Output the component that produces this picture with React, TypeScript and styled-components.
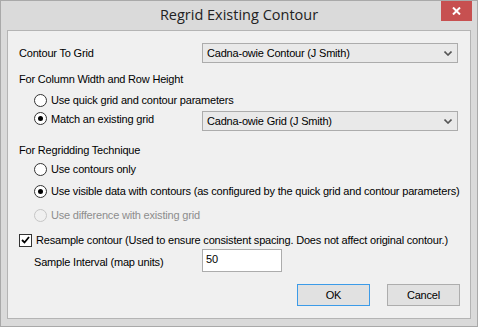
import styled, { createGlobalStyle } from 'styled-components'

const GlobalStyle = createGlobalStyle`
  html, body {
    margin: 0;
    padding: 0;
    background: #dadada;
  }
`

const Window = styled.div`
  width: 478px;
  height: 327px;
  box-sizing: border-box;
  background: #dadada;
  border: 1px solid #a9a9a9;
  display: flex;
  flex-direction: column;
  font-family: 'Liberation Sans', Arial, sans-serif;
  font-size: 11px;
  letter-spacing: -0.19px;
  color: #000;
`

const TitleBar = styled.div`
  height: 29px;
  flex: none;
  display: flex;
  align-items: center;
  justify-content: center;
  position: relative;
`

const Title = styled.div`
  font-family: 'Open Sans', 'Noto Sans', sans-serif;
  font-size: 14.5px;
  letter-spacing: 0;
  color: #222;
  margin-top: -2px;
`

const CloseButton = styled.div`
  position: absolute;
  top: 0;
  right: 5px;
  width: 31px;
  height: 20px;
  background: #c75050;
  display: flex;
  align-items: center;
  justify-content: center;
`

const Client = styled.div`
  flex: 1;
  margin: 0 6px 7px 6px;
  background: #f0f0f0;
  border: 1px solid #b4b4b4;
  padding: 12px 0 0 0;
  display: flex;
  flex-direction: column;
`

const Row = styled.div<{ $h: number; $top?: number; $indent?: number; $align?: string }>`
  height: ${p => p.$h}px;
  margin-top: ${p => p.$top ?? 0}px;
  padding-left: ${p => p.$indent ?? 11}px;
  display: flex;
  align-items: ${p => p.$align ?? 'center'};
`

const Label = styled.span<{ $w?: number; $disabled?: boolean }>`
  width: ${p => (p.$w ? `${p.$w}px` : 'auto')};
  flex: none;
  white-space: nowrap;
  color: ${p => (p.$disabled ? '#8d8d8d' : '#000')};
`

const Combo = styled.div`
  width: 256px;
  height: 20px;
  box-sizing: border-box;
  background: #e9e9e9;
  border: 1px solid #acacac;
  display: flex;
  align-items: center;
  justify-content: space-between;
  padding: 0 5px 0 4px;
`

const RadioLabel = styled.label<{ $w?: number }>`
  display: flex;
  align-items: center;
  gap: 4px;
  height: 15px;
  width: ${p => (p.$w ? `${p.$w}px` : 'auto')};
  flex: none;
`

const RadioCircle = styled.span<{ $checked?: boolean; $disabled?: boolean }>`
  width: 13px;
  height: 13px;
  box-sizing: border-box;
  border-radius: 50%;
  border: 1px solid ${p => (p.$disabled ? '#c6c6c6' : '#333')};
  background: ${p => (p.$disabled ? '#f0f0f0' : '#fff')};
  display: flex;
  align-items: center;
  justify-content: center;
  flex: none;

  &::after {
    content: '';
    display: ${p => (p.$checked ? 'block' : 'none')};
    width: 5px;
    height: 5px;
    border-radius: 50%;
    background: #000;
  }
`

const CheckBox = styled.span`
  width: 13px;
  height: 13px;
  box-sizing: border-box;
  border: 1px solid #333;
  background: #fff;
  display: flex;
  align-items: center;
  justify-content: center;
  flex: none;
`

const TextBox = styled.div`
  width: 80px;
  height: 23px;
  box-sizing: border-box;
  background: #fff;
  border: 1px solid #acacac;
  padding: 3px 0 0 3px;
`

const ButtonRow = styled.div`
  display: flex;
  justify-content: flex-end;
  gap: 17px;
  margin-top: 12px;
  padding-right: 10px;
`

const Button = styled.div<{ $default?: boolean }>`
  width: 73px;
  height: 22px;
  box-sizing: border-box;
  background: #e1e1e1;
  border: 1px solid ${p => (p.$default ? '#3c9be8' : '#adadad')};
  display: flex;
  align-items: center;
  justify-content: center;
`

const Chevron = () => (
  <svg width='8' height='5' viewBox='0 0 8 5'>
    <path d='M0.5 0.5 L4 4 L7.5 0.5' fill='none' stroke='#555' strokeWidth='1.6' />
  </svg>
)

function Radio({ label, checked, disabled, w }: { label: string; checked?: boolean; disabled?: boolean; w?: number }) {
  return (
    <RadioLabel $w={w}>
      <RadioCircle $checked={checked} $disabled={disabled} />
      <Label $disabled={disabled}>{label}</Label>
    </RadioLabel>
  )
}

export default function App() {
  return (
    <>
      <GlobalStyle />
      <Window>
        <TitleBar>
          <Title>Regrid Existing Contour</Title>
          <CloseButton>
            <svg width='9' height='8' viewBox='0 0 9 8'>
              <path d='M1 0.5 L8 7.5 M8 0.5 L1 7.5' stroke='#fff' strokeWidth='2' />
            </svg>
          </CloseButton>
        </TitleBar>
        <Client>
          <Row $h={20}>
            <Label $w={183}>Contour To Grid</Label>
            <Combo>
              <span>Cadna-owie Contour (J Smith)</span>
              <Chevron />
            </Combo>
          </Row>
          <Row $h={18} $top={7}>
            <Label>For Column Width and Row Height</Label>
          </Row>
          <Row $h={18} $top={3} $indent={26}>
            <Radio label='Use quick grid and contour parameters' />
          </Row>
          <Row $h={20} $top={2} $indent={26} $align='flex-start'>
            <Radio label='Match an existing grid' checked w={168} />
            <Combo>
              <span>Cadna-owie Grid (J Smith)</span>
              <Chevron />
            </Combo>
          </Row>
          <Row $h={18} $top={10}>
            <Label>For Regridding Technique</Label>
          </Row>
          <Row $h={18} $top={1} $indent={26}>
            <Radio label='Use contours only' />
          </Row>
          <Row $h={18} $top={4} $indent={26}>
            <Radio label='Use visible data with contours (as configured by the quick grid and contour parameters)' checked />
          </Row>
          <Row $h={18} $top={6} $indent={26}>
            <Radio label='Use difference with existing grid' disabled />
          </Row>
          <Row $h={18} $top={7} $indent={11}>
            <RadioLabel>
              <CheckBox>
                <svg width='9' height='8' viewBox='0 0 9 8'>
                  <path d='M1 4 L3.5 6.5 L8 1' fill='none' stroke='#000' strokeWidth='1.8' />
                </svg>
              </CheckBox>
              <Label>Resample contour (Used to ensure consistent spacing. Does not affect original contour.)</Label>
            </RadioLabel>
          </Row>
          <Row $h={23} $top={0} $indent={26} $align='flex-end'>
            <Label $w={168} style={{ paddingBottom: 4 }}>Sample Interval (map units)</Label>
            <TextBox>50</TextBox>
          </Row>
          <ButtonRow>
            <Button $default>OK</Button>
            <Button>Cancel</Button>
          </ButtonRow>
        </Client>
      </Window>
    </>
  )
}
